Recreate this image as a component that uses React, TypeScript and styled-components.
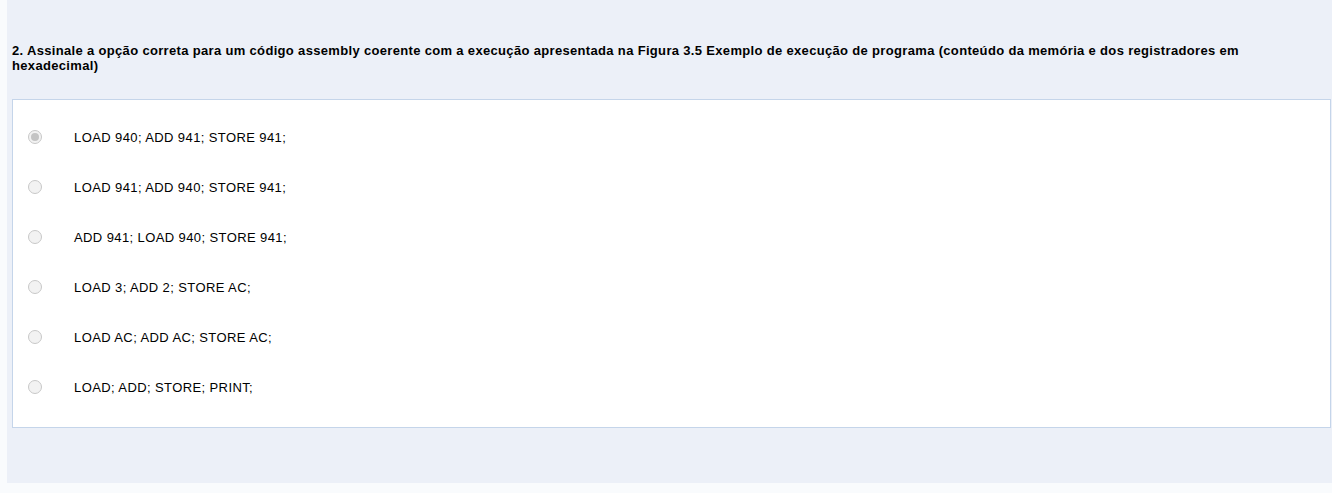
import React from "react";
import styled, { createGlobalStyle } from "styled-components";

const GlobalStyle = createGlobalStyle`
  html, body {
    margin: 0;
    padding: 0;
    background: #f9fbfd;
    font-family: "Liberation Sans", Arial, sans-serif;
  }
`;

const Page = styled.div`
  padding-left: 7px;
`;

const Panel = styled.div`
  background: #ecf0f8;
  height: 483px;
  box-sizing: border-box;
  padding: 43px 1px 0 5px;
`;

const Title = styled.div`
  font-size: 13px;
  font-weight: bold;
  letter-spacing: 0.33px;
  line-height: 15px;
  color: #000;
  padding-right: 60px;
  margin-bottom: 26px;
`;

const Options = styled.div`
  background: #fff;
  border: 1px solid #c5d5ea;
  padding: 12px 0 15px 15px;
  display: flex;
  flex-direction: column;
`;

const Option = styled.label`
  display: flex;
  align-items: center;
  height: 50px;
  font-size: 13px;
  letter-spacing: 0.4px;
  color: #000;
`;

const Radio = styled.span<{ $checked?: boolean }>`
  width: 14px;
  height: 14px;
  box-sizing: border-box;
  border-radius: 50%;
  border: 1px solid #c8c8c8;
  background: #f2f2f2;
  margin-right: 32px;
  display: flex;
  align-items: center;
  justify-content: center;
  &::after {
    content: "";
    width: 8px;
    height: 8px;
    border-radius: 50%;
    background: ${(p) => (p.$checked ? "#c4c4c4" : "transparent")};
  }
`;

const options = [
  "LOAD 940; ADD 941; STORE 941;",
  "LOAD 941; ADD 940; STORE 941;",
  "ADD 941; LOAD 940; STORE 941;",
  "LOAD 3; ADD 2; STORE AC;",
  "LOAD AC; ADD AC; STORE AC;",
  "LOAD; ADD; STORE; PRINT;",
];

export default function App() {
  return (
    <Page>
      <GlobalStyle />
      <Panel>
        <Title>
          2. Assinale a opção correta para um código assembly coerente com a
          execução apresentada na Figura 3.5 Exemplo de execução de programa
          (conteúdo da memória e dos registradores em hexadecimal)
        </Title>
        <Options>
          {options.map((o, i) => (
            <Option key={i}>
              <Radio $checked={i === 0} />
              {o}
            </Option>
          ))}
        </Options>
      </Panel>
    </Page>
  );
}
